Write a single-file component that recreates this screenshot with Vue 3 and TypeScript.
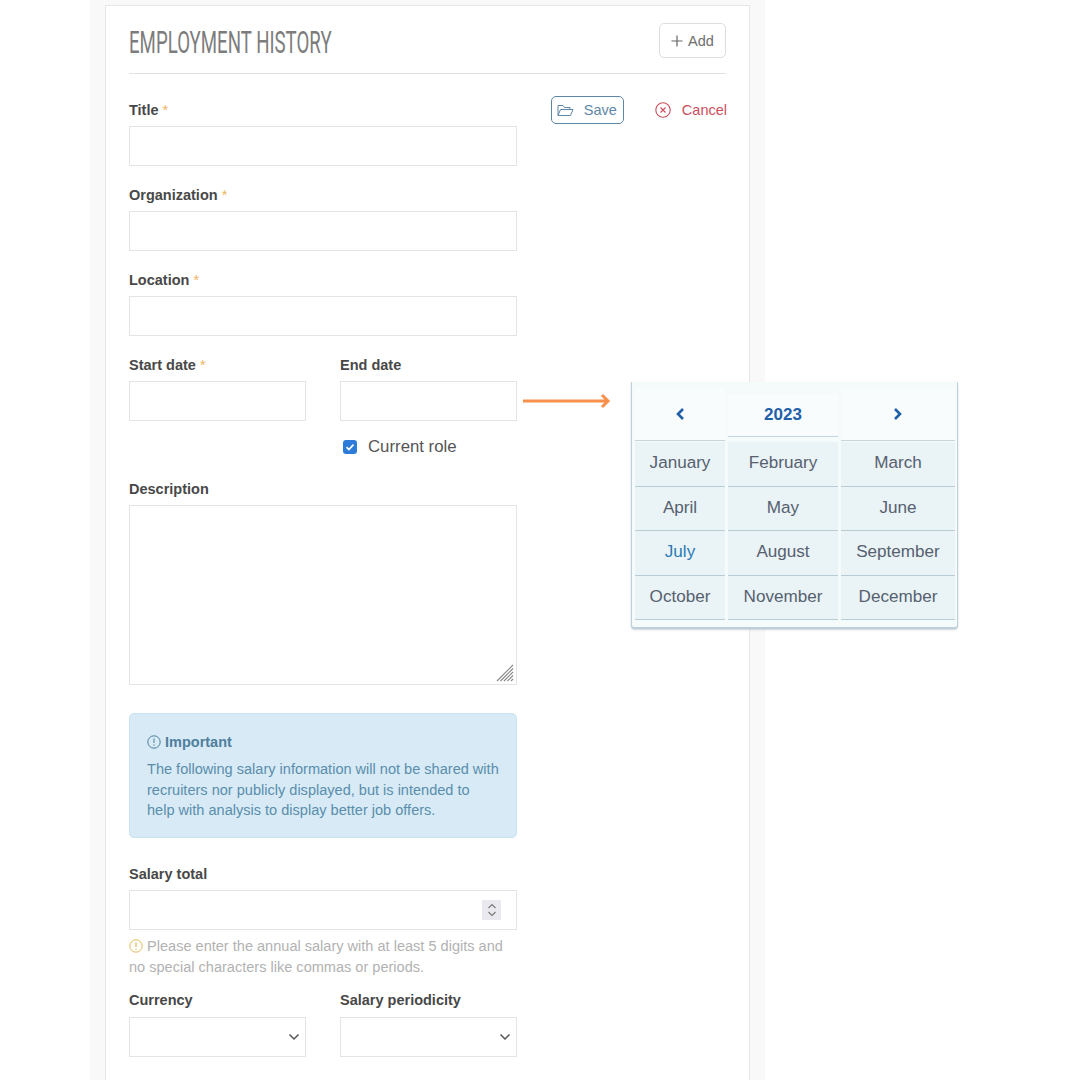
<script setup lang="ts">
const months: string[] = ['January','February','March','April','May','June','July','August','September','October','November','December']
</script>

<template>
  <div class="page">
    <div class="shell">
      <section class="card">
        <header class="head">
          <h1 class="title"><span>EMPLOYMENT HISTORY</span></h1>
          <button class="add"><svg width="12" height="12" viewBox="0 0 12 12"><path d="M6 .5v11M.5 6h11" stroke="#666" stroke-width="1.2"/></svg>Add</button>
        </header>
        <div class="body">
          <form class="form" @submit.prevent>
            <div class="field"><label>Title <i>*</i></label><div class="input"></div></div>
            <div class="field"><label>Organization <i>*</i></label><div class="input"></div></div>
            <div class="field"><label>Location <i>*</i></label><div class="input"></div></div>
            <div class="pair">
              <div class="field tight"><label>Start date <i>*</i></label><div class="input"></div></div>
              <div class="field tight"><label>End date</label><div class="input"></div>
                <div class="check"><span class="box"><svg width="10" height="10" viewBox="0 0 10 10"><path d="M1.5 5.2l2.4 2.4 4.6-5" fill="none" stroke="#fff" stroke-width="1.7"/></svg></span>Current role</div>
              </div>
            </div>
            <div class="field desc"><label>Description</label>
              <div class="textarea"><svg class="grip" width="20" height="20" viewBox="0 0 20 20"><path d="M2 18L18 2M5.500 18L18 5.500M9 18l9-9M12.500 18l5.500-5.500M16 18l2-2" stroke="#8a8a8a" stroke-width="1.2"/></svg></div>
            </div>
            <aside class="alert">
              <div class="alert-title"><svg width="14" height="14" viewBox="0 0 14 14"><circle cx="7" cy="7" r="6.2" fill="none" stroke="#4b7f9c"/><path d="M7 3.5v4.5M7 9.5v1.2" stroke="#4b7f9c" stroke-width="1"/></svg>Important</div>
              <p>The following salary information will not be shared with recruiters nor publicly displayed, but is intended to help with analysis to display better job offers.</p>
            </aside>
            <div class="field salary"><label>Salary total</label>
              <div class="input number"><span class="spin"><svg width="10" height="16" viewBox="0 0 10 16"><path d="M1.500 6L5 2.500 8.500 6M1.500 10L5 13.500 8.500 10" fill="none" stroke="#777" stroke-width="1.100"/></svg></span></div>
              <p class="help"><svg width="14" height="14" viewBox="0 0 14 14"><circle cx="7" cy="7" r="6.200" fill="none" stroke="#e3bb55"/><path d="M7 3.500v4.500M7 9.500v1.200" stroke="#d8a93a" stroke-width="1"/></svg> Please enter the annual salary with at least 5 digits and no special characters like commas or periods.</p>
            </div>
            <div class="pair money">
              <div class="field tight"><label>Currency</label><div class="input select"><svg width="12" height="8" viewBox="0 0 12 8"><path d="M1.500 1.500L6 6l4.500-4.500" fill="none" stroke="#555" stroke-width="1.500"/></svg></div></div>
              <div class="field tight"><label>Salary periodicity</label><div class="input select"><svg width="12" height="8" viewBox="0 0 12 8"><path d="M1.500 1.500L6 6l4.500-4.500" fill="none" stroke="#555" stroke-width="1.500"/></svg></div></div>
            </div>
          </form>
          <div class="actions">
            <button class="save"><svg width="17" height="13" viewBox="0 0 17 13"><path d="M1 11.500V1.500h5l1.500 2H13v2M1 11.500h12.500l2.500-6H3.500z" fill="none" stroke="#5f87a5" stroke-width="1"/></svg>Save</button>
            <button class="cancel"><svg width="16" height="16" viewBox="0 0 16 16"><circle cx="8" cy="8" r="7.200" fill="none" stroke="#c9505c" stroke-width="1.100"/><path d="M5.500 5.500l5 5M10.500 5.500l-5 5" stroke="#c9505c" stroke-width="1.200"/></svg>Cancel</button>
          </div>
        </div>
      </section>
    </div>

    <svg class="arrow" width="90" height="18" viewBox="0 0 90 18"><path d="M0 9h85M79 3l6 6-6 6" fill="none" stroke="#f98f4d" stroke-width="3"/></svg>

    <div class="picker">
      <div class="grid top">
        <div class="cell hd"><svg width="10" height="14" viewBox="0 0 10 14"><path d="M8 2L3 7l5 5" fill="none" stroke="#1f5fa8" stroke-width="2.600"/></svg></div>
        <div class="cell hd year">2023</div>
        <div class="cell hd"><svg width="10" height="14" viewBox="0 0 10 14"><path d="M2 2l5 5-5 5" fill="none" stroke="#1f5fa8" stroke-width="2.600"/></svg></div>
      </div>
      <div class="grid">
        <div v-for="m in months" :key="m" class="cell month" :class="{ current: m === 'July' }">{{ m }}</div>
      </div>
    </div>
  </div>
</template>

<style>
html, body { margin: 0; background: #fff; overflow: hidden; }
</style>

<style scoped>
.page { position: relative; width: 1080px; height: 1080px; overflow: hidden; background: #fff; font-family: "Liberation Sans", Arial, sans-serif; }
.shell { width: 675px; height: 1080px; margin-left: 90px; padding: 5px 15px 0; box-sizing: border-box; background: #f9f9f9; }
.card { width: 645px; height: 1090px; box-sizing: border-box; background: #fff; border: 1px solid #e6e6e6; padding: 0 23px; }
.head { height: 67px; display: flex; justify-content: space-between; align-items: flex-start; border-bottom: 1px solid #e2e2e2; }
.title { margin: 20px 0 0; font: 400 31px/34px Roboto, "Liberation Sans", sans-serif; color: #7c7c7c; white-space: nowrap; width: 204px; }
.title span { display: inline-block; transform: scaleX(.602); transform-origin: 0 50%; }
.add { margin-top: 17px; width: 67px; height: 35px; border: 1px solid #dedede; border-radius: 5px; background: #fff; display: flex; align-items: center; justify-content: center; gap: 5px; font: 14.500px "Liberation Sans", sans-serif; color: #6e6e6e; padding: 0; }
.body { display: flex; justify-content: space-between; }
.form { width: 388px; padding-top: 26px; }
.field { margin-bottom: 19px; }
.field label { display: block; height: 20px; line-height: 20px; margin-bottom: 6px; font-size: 14.500px; font-weight: 700; color: #484848; }
.field label i { font-style: normal; color: #edb45f; font-weight: 400; }
.input { height: 38px; border: 1px solid #e4e4e4; background: #fff; }
.pair { display: grid; grid-template-columns: 177px 177px; column-gap: 34px; }
.tight { margin-bottom: 0; }
.money label { margin-bottom: 7px; }
.check { display: flex; align-items: center; gap: 11px; margin: 16px 0 0 3px; height: 20px; font-size: 16.800px; color: #555; }
.box { width: 14px; height: 14px; border-radius: 3px; background: #2d7bd8; display: flex; align-items: center; justify-content: center; }
.desc { margin: 22px 0 28px; }
.textarea { position: relative; height: 178px; border: 1px solid #e4e4e4; }
.grip { position: absolute; right: 1px; bottom: 1px; }
.alert { height: 125px; box-sizing: border-box; padding: 18px 17px 0; background: #d7eaf6; border: 1px solid #c9e2f0; border-radius: 5px; color: #5a8eab; }
.alert-title { display: flex; align-items: center; gap: 4px; height: 20px; font-size: 14.500px; font-weight: 700; color: #4f7f9d; }
.alert p { margin: 7px 0 0; max-width: 353px; font-size: 14.550px; line-height: 20.500px; }
.salary { margin: 26px 0 0; }
.number { display: flex; align-items: center; justify-content: flex-end; padding-right: 15px; }
.spin { width: 19px; height: 20px; background: #e9e9ef; display: flex; align-items: center; justify-content: center; }
.help { margin: 6px 0 12px; font-size: 14.550px; line-height: 21px; color: #b2b2b2; }
.help svg { vertical-align: -2px; }
.select { display: flex; align-items: center; justify-content: flex-end; padding-right: 5px; }
.actions { display: flex; align-items: center; gap: 31px; height: 30px; margin: 21px -1px 0 0; }
.save { width: 73px; height: 28px; box-sizing: border-box; border: 1.500px solid #5f87a5; border-radius: 5px; background: #fff; display: flex; align-items: center; gap: 10px; padding: 0 0 0 5px; font: 14.500px "Liberation Sans", sans-serif; color: #5f87a5; }
.cancel { border: 0; padding: 0; background: none; display: flex; align-items: center; gap: 11px; font: 14.500px "Liberation Sans", sans-serif; color: #c9505c; }
.arrow { position: absolute; left: 523px; top: 392px; }
.picker { position: absolute; left: 631px; top: 382px; width: 327px; height: 247px; box-sizing: border-box; padding: 6px 2px 0 3px; background: #f5fafb; border: solid #bdd0da; border-width: 0 1px 2px 1px; border-radius: 0 0 4px 4px; box-shadow: 0 1px 2px rgba(90,120,140,.3); }
.grid { display: grid; grid-template-columns: 90px 110px 114px; column-gap: 3px; }
.top { align-items: center; margin-bottom: 1px; }
.cell { display: flex; align-items: center; justify-content: center; box-sizing: border-box; }
.hd { height: 53px; background: #f9fcfd; border-bottom: 1px solid #c4d5dd; }
.year { height: 43px; font-size: 17px; font-weight: 700; color: #1f5fa8; margin-top: 2px; }
.month { height: 44.500px; padding-bottom: 1px; background: #eaf3f6; border-bottom: 1px solid #b8ccd6; font-size: 17.100px; color: #56606f; }
.current { color: #2b7bb5; }
</style>
